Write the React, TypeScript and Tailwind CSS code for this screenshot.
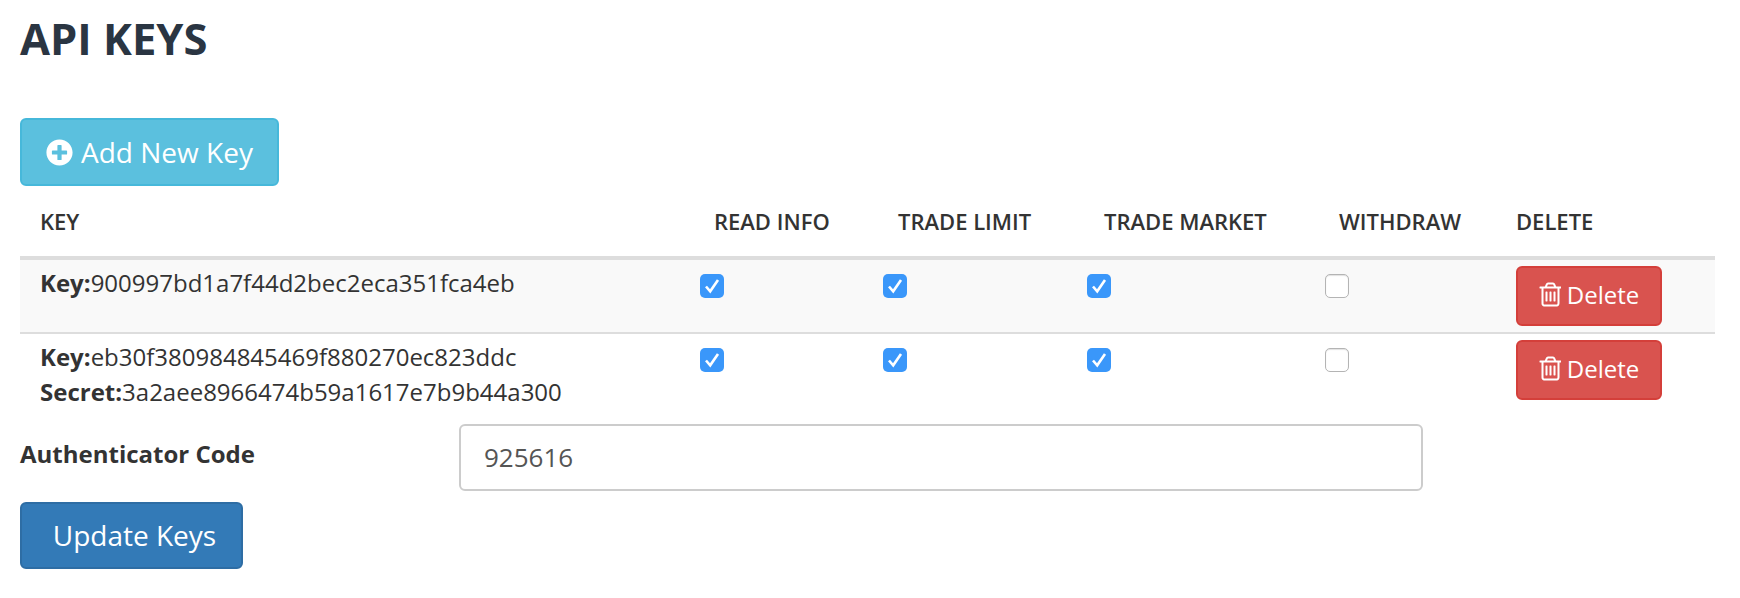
import { FaPlusCircle } from "react-icons/fa";

const Checkbox = ({ checked }: { checked?: boolean }) => {
  if (!checked) {
    return (
      <span className="block w-6 h-6 rounded-[5px] bg-white border border-[#b4b4b4] shadow-[inset_0_1px_1px_rgba(0,0,0,0.12)]" />
    );
  }
  return (
    <span className="block w-6 h-6 rounded-[5px] bg-[#3a97fa]">
      <svg width="24" height="24" viewBox="0 0 24 24" fill="none">
        <path d="M6 12.5 L10.2 17.3 L18 6" stroke="#fff" strokeWidth="2.6" />
      </svg>
    </span>
  );
};

const TrashIcon = () => (
  <svg width="22" height="28" viewBox="0 0 1408 1792" fill="currentColor">
    <path d="M544 704v576q0 14-9 23t-23 9h-64q-14 0-23-9t-9-23v-576q0-14 9-23t23-9h64q14 0 23 9t9 23zm256 0v576q0 14-9 23t-23 9h-64q-14 0-23-9t-9-23v-576q0-14 9-23t23-9h64q14 0 23 9t9 23zm256 0v576q0 14-9 23t-23 9h-64q-14 0-23-9t-9-23v-576q0-14 9-23t23-9h64q14 0 23 9t9 23zm128 724v-948h-896v948q0 22 7 40.500t14.500 27 10.500 8.500h832q3 0 10.500-8.500t14.500-27 7-40.500zm-672-1076h448l-48-117q-7-9-17-11h-317q-10 2-17 11zm928 32v64q0 14-9 23t-23 9h-96v948q0 83-47 143.500t-113 60.500h-832q-66 0-113-58.500t-47-141.500v-952h-96q-14 0-23-9t-9-23v-64q0-14 9-23t23-9h309l70-167q15-37 54-63t79-26h320q40 0 79 26t54 63l70 167h309q14 0 23 9t9 23z" />
  </svg>
);

const DeleteButton = () => (
  <button className="flex items-center justify-center gap-[6px] w-[146px] h-[60px] pb-[2px] rounded-md bg-[#d9534f] border-2 border-[#d43f3a] text-white text-[24px]">
    <TrashIcon />
    Delete
  </button>
);

const Row = ({
  keyValue,
  secret,
  striped,
}: {
  keyValue: string;
  secret?: string;
  striped?: boolean;
}) => (
  <tr className={striped ? "bg-[#f9f9f9] border-b-2 border-[#dddddd]" : ""}>
    <td className="pl-5 pt-[5px] align-top text-[24px] leading-[35px] text-[#333333]">
      <div>
        <b>Key:</b>
        {keyValue}
      </div>
      {secret && (
        <div>
          <b>Secret:</b>
          {secret}
        </div>
      )}
    </td>
    <td className="pl-[6px] pt-[14px] align-top">
      <Checkbox checked />
    </td>
    <td className="pl-[5px] pt-[14px] align-top">
      <Checkbox checked />
    </td>
    <td className="pl-[3px] pt-[14px] align-top">
      <Checkbox checked />
    </td>
    <td className="pl-[6px] pt-[14px] align-top">
      <Checkbox />
    </td>
    <td className="pl-5 pt-[6px] pb-[6px] align-top">
      <DeleteButton />
    </td>
  </tr>
);

export default function App() {
  return (
    <div className="h-[598px] pl-5 pr-[25px] bg-white font-['Open_Sans',sans-serif] text-[#333333]">
      <h1 className="pt-[11px] h-[118px] text-[43.5px] leading-[56px] font-bold text-[#2a3542]">
        API KEYS
      </h1>

      <button className="flex items-center justify-center gap-[8px] w-[259px] h-[68px] rounded-md bg-[#5bc0de] border-2 border-[#46b8da] text-white text-[28px]">
        <FaPlusCircle className="w-[27px] h-[27px]" />
        Add New Key
      </button>

      <table className="w-[1695px] table-fixed border-collapse">
        <colgroup>
          <col className="w-[674px]" />
          <col className="w-[184px]" />
          <col className="w-[206px]" />
          <col className="w-[235px]" />
          <col className="w-[177px]" />
          <col className="w-[219px]" />
        </colgroup>
        <thead>
          <tr className="h-[72px] border-b-4 border-[#dddddd] text-left text-[22px]">
            <th className="pl-5 font-semibold">KEY</th>
            <th className="pl-5 font-semibold">READ INFO</th>
            <th className="pl-5 font-semibold">TRADE LIMIT</th>
            <th className="pl-5 font-semibold">TRADE MARKET</th>
            <th className="pl-5 font-semibold">WITHDRAW</th>
            <th className="pl-5 font-semibold">DELETE</th>
          </tr>
        </thead>
        <tbody>
          <Row striped keyValue="900997bd1a7f44d2bec2eca351fca4eb" />
          <Row
            keyValue="eb30f380984845469f880270ec823ddc"
            secret="3a2aee8966474b59a1617e7b9b44a300"
          />
        </tbody>
      </table>

      <div className="flex mt-[15px]">
        <label className="w-[439px] pt-[14px] text-[24px] leading-[32px] font-bold">
          Authenticator Code
        </label>
        <input
          readOnly
          value="925616"
          className="w-[964px] h-[67px] px-[23px] pb-[2px] rounded-md bg-white border-2 border-[#cccccc] text-[26px] text-[#555555]"
        />
      </div>

      <button className="block mt-[11px] w-[223px] h-[67px] pl-[6px] pb-[2px] rounded-md bg-[#337ab7] border-2 border-[#2e6da4] text-white text-[28px]">
        Update Keys
      </button>
    </div>
  );
}
